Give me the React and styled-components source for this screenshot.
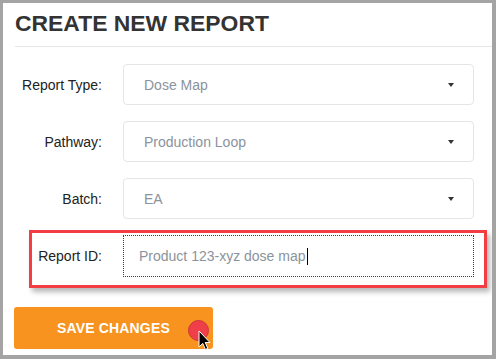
import React from "react";
import styled, { createGlobalStyle } from "styled-components";

const GlobalStyle = createGlobalStyle`
  body {
    margin: 0;
    background: #ffffff;
    font-family: "Liberation Sans", Arial, sans-serif;
  }
`;

const Frame = styled.div`
  box-sizing: border-box;
  width: 496px;
  height: 359px;
  border-style: solid;
  border-color: #a4a4a4;
  border-width: 3px 4px 4px 3px;
  background: #ffffff;
  overflow: hidden;
`;

const Header = styled.div`
  margin-left: 12px;
  padding-top: 7px;
  padding-bottom: 10px;
  border-bottom: 1px solid #e6e6e6;
`;

const Title = styled.h1`
  margin: 0;
  font-size: 22.9px;
  line-height: 26px;
  font-weight: bold;
  color: #333333;
`;

const Form = styled.div`
  display: flex;
  flex-direction: column;
  padding-top: 17px;
`;

const Label = styled.label`
  box-sizing: border-box;
  width: 87px;
  margin-right: 21px;
  text-align: right;
  font-size: 14px;
  color: #222222;
  flex-shrink: 0;
`;

const Row = styled.div`
  display: flex;
  align-items: center;
  margin-left: 12px;

  & + & {
    margin-top: 16px;
  }
`;

const HighlightRow = styled(Row)`
  && {
    margin: 11px 5px 0 26px;
  }
  border: 3px solid #f03e42;
  padding: 2px 10px 8px 0;
  box-shadow: 3px 4px 5px rgba(0, 0, 0, 0.28);

  ${Label} {
    width: 70px;
  }
`;

const Select = styled.div`
  box-sizing: border-box;
  width: 351px;
  height: 41px;
  display: flex;
  align-items: center;
  justify-content: space-between;
  padding: 0 19px 0 20px;
  border: 1px solid #e5e5e5;
  border-radius: 4px;
  font-size: 14px;
  color: #8b939c;
`;

const Caret = styled.span`
  width: 0;
  height: 0;
  border-left: 3.5px solid transparent;
  border-right: 3.5px solid transparent;
  border-top: 4px solid #333333;
`;

const TextBox = styled.div`
  box-sizing: border-box;
  width: 351px;
  height: 42px;
  display: flex;
  align-items: center;
  padding: 0 15px;
  border: 1px dotted #3a3a3a;
  font-size: 14px;
  color: #8b939c;
`;

const TypeCursor = styled.span`
  display: inline-block;
  width: 1.5px;
  height: 17px;
  margin-left: 1px;
  background: #000000;
`;

const SaveButton = styled.button`
  position: relative;
  display: block;
  width: 199px;
  height: 42px;
  margin: 19px 0 0 11px;
  border: none;
  border-radius: 3px;
  background: #f7931e;
  color: #ffffff;
  font-family: "Liberation Sans", Arial, sans-serif;
  font-size: 14px;
  font-weight: bold;
  letter-spacing: 0.15px;
  padding: 0;
`;

const ClickDot = styled.span`
  position: absolute;
  left: 174px;
  top: 13px;
  width: 19px;
  height: 19px;
  border-radius: 50%;
  background: #ef3f48;
  border: 1px solid #c9353c;
`;

const Pointer = styled.svg`
  position: absolute;
  left: 184px;
  top: 23px;
`;

const fields = [
  { label: "Report Type:", value: "Dose Map" },
  { label: "Pathway:", value: "Production Loop" },
  { label: "Batch:", value: "EA" },
];

export default function App() {
  return (
    <Frame>
      <GlobalStyle />
      <Header>
        <Title>CREATE NEW REPORT</Title>
      </Header>
      <Form>
        {fields.map((f) => (
          <Row key={f.label}>
            <Label>{f.label}</Label>
            <Select>
              <span>{f.value}</span>
              <Caret />
            </Select>
          </Row>
        ))}
        <HighlightRow>
          <Label>Report ID:</Label>
          <TextBox>
            Product 123-xyz dose map
            <TypeCursor />
          </TextBox>
        </HighlightRow>
      </Form>
      <SaveButton>
        SAVE CHANGES
        <ClickDot />
        <Pointer width="13" height="21" viewBox="0 0 13 21">
          <path
            d="M1 1 L1 17 L4.8 13.4 L7.4 19.4 L9.8 18.4 L7.2 12.5 L12 12.5 Z"
            fill="#000"
            stroke="#fff"
            strokeWidth="1"
            strokeLinejoin="round"
          />
        </Pointer>
      </SaveButton>
    </Frame>
  );
}
